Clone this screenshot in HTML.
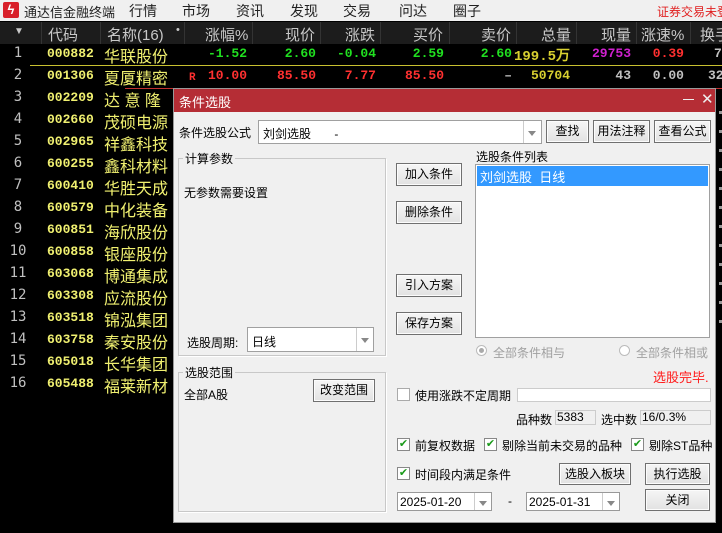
<!DOCTYPE html>
<html><head><meta charset="utf-8"><style>
*{margin:0;padding:0;box-sizing:border-box}
body{width:722px;height:533px;background:#000;position:relative;overflow:hidden;font-family:"Liberation Sans","Noto Sans CJK SC",sans-serif}
.a{position:absolute;white-space:nowrap}
.top{left:0;top:0;width:722px;height:21px;background:#f0f0f0;font-size:14px;color:#222}
.hdr{left:0;top:22px;width:722px;height:22px;background:#1c1c1c;color:#c8c8c8;font-size:15px}
.sep{position:absolute;top:0;width:1px;height:22px;background:#333}
.num{font-family:"Liberation Mono","DejaVu Sans Mono",monospace;font-weight:bold;font-size:13px}
.yc{color:#f0f070}
.nm{color:#f0f070;font-size:16px;left:104px}
.rn{color:#c0c0c0;font-size:14px;width:36px;text-align:center;left:0;font-family:"DejaVu Sans Mono",monospace}
.r{text-align:right}
.dlg{left:173px;top:88px;width:543px;height:435px;background:#f0f0f0;border:1px solid #999;font-size:12px;color:#000}
.tb{left:0;top:0;width:541px;height:23px;background:#b52d35;color:#fff;font-size:13px}
.btn{position:absolute;background:linear-gradient(#f6f6f6,#e2e2e2);border:1px solid #707070;box-shadow:inset 0 0 0 1px #fcfcfc;font-size:12px;text-align:center;color:#000}
.grp{position:absolute;border:1px solid #c8c8c8;box-shadow:1px 1px 0 #fff}
.gl{position:absolute;background:#f0f0f0;padding:0 2px;font-size:12px;top:-9px;left:4px}
.cb{position:absolute;width:13px;height:13px;border:1px solid #888;background:#fff;color:#1a9a1a;font-size:11px;line-height:11px;text-align:center}
.combo{position:absolute;background:#fff;border:1px solid #a0a0a0}
.dd{position:absolute;right:0;top:0;bottom:0;width:17px;border-left:1px solid #ccc}
.dd:after{content:"";position:absolute;left:4px;top:45%;border:4px solid transparent;border-top:5px solid #888}
.t13{font-size:12px}
</style></head><body>
<div class="a top">
 <div class="a" style="left:3px;top:2px;width:16px;height:16px;background:#d8202a;border-radius:2px;color:#fff;font-size:13px;line-height:16px;text-align:center;font-weight:bold">ϟ</div>
 <div class="a" style="left:24px;top:2px;font-size:13px">通达信金融终端</div>
 <div class="a" style="left:129px;top:1px">行情</div>
 <div class="a" style="left:182px;top:1px">市场</div>
 <div class="a" style="left:236px;top:1px">资讯</div>
 <div class="a" style="left:290px;top:1px">发现</div>
 <div class="a" style="left:343px;top:1px">交易</div>
 <div class="a" style="left:399px;top:1px">问达</div>
 <div class="a" style="left:453px;top:1px">圈子</div>
 <div class="a" style="left:657px;top:3px;color:#e02020;font-size:12px">证券交易未登</div>
</div>
<div class="a hdr">
 <div class="sep" style="left:41px"></div><div class="sep" style="left:100px"></div><div class="sep" style="left:184px"></div><div class="sep" style="left:252px"></div><div class="sep" style="left:320px"></div><div class="sep" style="left:380px"></div><div class="sep" style="left:449px"></div><div class="sep" style="left:516px"></div><div class="sep" style="left:576px"></div><div class="sep" style="left:636px"></div><div class="sep" style="left:690px"></div>
 <div class="a" style="left:14px;top:4px;font-size:10px">▼</div>
 <div class="a" style="left:48px;top:2px">代码</div>
 <div class="a" style="left:107px;top:2px">名称(16)</div>
 <div class="a" style="left:176px;top:2px;font-size:11px">•</div>
 <div class="a" style="left:205px;top:2px">涨幅%</div>
 <div class="a" style="left:285px;top:2px">现价</div>
 <div class="a" style="left:345px;top:2px">涨跌</div>
 <div class="a" style="left:413px;top:2px">买价</div>
 <div class="a" style="left:481px;top:2px">卖价</div>
 <div class="a" style="left:541px;top:2px">总量</div>
 <div class="a" style="left:601px;top:2px">现量</div>
 <div class="a" style="left:641px;top:2px">涨速%</div>
 <div class="a" style="left:700px;top:2px">换手</div>
</div>
<div class="a" style="left:30px;top:65px;width:692px;height:1px;background:#c8c030"></div>
<div class="a" style="left:125px;top:88px;width:597px;height:1px;background:#c03030"></div>
<!-- row1 -->
<div class="a rn" style="top:45px">1</div><div class="a num yc" style="left:47px;top:46px">000882</div><div class="a nm" style="top:43px">华联股份</div>
<div class="a num r" style="right:475px;top:46px;color:#20e020">-1.52</div>
<div class="a num r" style="right:406px;top:46px;color:#20e020">2.60</div>
<div class="a num r" style="right:346px;top:46px;color:#20e020">-0.04</div>
<div class="a num r" style="right:278px;top:46px;color:#20e020">2.59</div>
<div class="a num r" style="right:210px;top:46px;color:#20e020">2.60</div>
<div class="a num r" style="right:152px;top:45px;color:#d8d030;font-size:14px">199.5万</div>
<div class="a num r" style="right:91px;top:46px;color:#d020d0">29753</div>
<div class="a num r" style="right:38px;top:46px;color:#ff3030">0.39</div>
<div class="a num" style="left:714px;top:46px;color:#c0c0c0">7</div>
<!-- row2 -->
<div class="a rn" style="top:67px">2</div><div class="a num yc" style="left:47px;top:68px">001306</div><div class="a nm" style="top:65px">夏厦精密</div>
<div class="a num" style="left:189px;top:72px;color:#ff3030;font-size:11px">R</div>
<div class="a num r" style="right:475px;top:68px;color:#ff3030">10.00</div>
<div class="a num r" style="right:406px;top:68px;color:#ff3030">85.50</div>
<div class="a num r" style="right:346px;top:68px;color:#ff3030">7.77</div>
<div class="a num r" style="right:278px;top:68px;color:#ff3030">85.50</div>
<div class="a num r" style="right:210px;top:68px;color:#c0c0c0">–</div>
<div class="a num r" style="right:152px;top:68px;color:#d8d030">50704</div>
<div class="a num r" style="right:91px;top:68px;color:#c0c0c0">43</div>
<div class="a num r" style="right:38px;top:68px;color:#c0c0c0">0.00</div>
<div class="a num" style="left:708px;top:68px;color:#c0c0c0">32</div>
<!-- rows 3-16 -->
<div class="a rn" style="top:89px">3</div><div class="a num yc" style="left:47px;top:90px">002209</div><div class="a nm" style="top:87px">达 意 隆</div>
<div class="a rn" style="top:111px">4</div><div class="a num yc" style="left:47px;top:112px">002660</div><div class="a nm" style="top:109px">茂硕电源</div>
<div class="a rn" style="top:133px">5</div><div class="a num yc" style="left:47px;top:134px">002965</div><div class="a nm" style="top:131px">祥鑫科技</div>
<div class="a rn" style="top:155px">6</div><div class="a num yc" style="left:47px;top:156px">600255</div><div class="a nm" style="top:153px">鑫科材料</div>
<div class="a rn" style="top:177px">7</div><div class="a num yc" style="left:47px;top:178px">600410</div><div class="a nm" style="top:175px">华胜天成</div>
<div class="a rn" style="top:199px">8</div><div class="a num yc" style="left:47px;top:200px">600579</div><div class="a nm" style="top:197px">中化装备</div>
<div class="a rn" style="top:221px">9</div><div class="a num yc" style="left:47px;top:222px">600851</div><div class="a nm" style="top:219px">海欣股份</div>
<div class="a rn" style="top:243px">10</div><div class="a num yc" style="left:47px;top:244px">600858</div><div class="a nm" style="top:241px">银座股份</div>
<div class="a rn" style="top:265px">11</div><div class="a num yc" style="left:47px;top:266px">603068</div><div class="a nm" style="top:263px">博通集成</div>
<div class="a rn" style="top:287px">12</div><div class="a num yc" style="left:47px;top:288px">603308</div><div class="a nm" style="top:285px">应流股份</div>
<div class="a rn" style="top:309px">13</div><div class="a num yc" style="left:47px;top:310px">603518</div><div class="a nm" style="top:307px">锦泓集团</div>
<div class="a rn" style="top:331px">14</div><div class="a num yc" style="left:47px;top:332px">603758</div><div class="a nm" style="top:329px">秦安股份</div>
<div class="a rn" style="top:353px">15</div><div class="a num yc" style="left:47px;top:354px">605018</div><div class="a nm" style="top:351px">长华集团</div>
<div class="a rn" style="top:375px">16</div><div class="a num yc" style="left:47px;top:376px">605488</div><div class="a nm" style="top:373px">福莱新材</div>
<div class="a" style="left:719px;top:95px;width:3px;height:230px;background:repeating-linear-gradient(#000 0 16px,#999 16px 19px)"></div>

<!-- dialog -->
<div class="a dlg">
 <div class="a tb"><div class="a" style="left:5px;top:3px">条件选股</div>
  <div class="a" style="left:509px;top:10px;width:11px;height:1px;background:#eee"></div>
  <div class="a" style="left:527px;top:1px;font-size:15px;color:#eee">✕</div></div>
 <div class="a t13" style="left:5px;top:35px">条件选股公式</div>
 <div class="combo" style="left:84px;top:31px;width:284px;height:24px"><div class="a t13" style="left:4px;top:4px">刘剑选股&nbsp;&nbsp;&nbsp;&nbsp;&nbsp;&nbsp;&nbsp;-</div><div class="dd" style="width:18px"></div></div>
 <div class="btn" style="left:372px;top:31px;width:43px;height:23px;line-height:21px">查找</div>
 <div class="btn" style="left:419px;top:31px;width:57px;height:23px;line-height:21px">用法注释</div>
 <div class="btn" style="left:480px;top:31px;width:57px;height:23px;line-height:21px">查看公式</div>
 <div class="grp" style="left:4px;top:69px;width:208px;height:198px"><div class="gl">计算参数</div>
  <div class="a t13" style="left:5px;top:25px">无参数需要设置</div>
  <div class="a t13" style="left:8px;top:175px">选股周期:</div>
  <div class="combo" style="left:68px;top:168px;width:127px;height:25px"><div class="a t13" style="left:4px;top:5px">日线</div><div class="dd"></div></div>
 </div>
 <div class="grp" style="left:4px;top:283px;width:208px;height:140px"><div class="gl">选股范围</div>
  <div class="a t13" style="left:5px;top:13px">全部A股</div>
  <div class="btn" style="left:134px;top:6px;width:62px;height:23px;line-height:21px">改变范围</div>
 </div>
 <div class="btn" style="left:222px;top:74px;width:66px;height:23px;line-height:21px">加入条件</div>
 <div class="btn" style="left:222px;top:112px;width:66px;height:23px;line-height:21px">删除条件</div>
 <div class="btn" style="left:222px;top:185px;width:66px;height:23px;line-height:21px">引入方案</div>
 <div class="btn" style="left:222px;top:223px;width:66px;height:23px;line-height:21px">保存方案</div>
 <div class="a t13" style="left:302px;top:59px">选股条件列表</div>
 <div class="a" style="left:301px;top:75px;width:235px;height:174px;background:#fff;border:1px solid #a0a0a0">
  <div class="a" style="left:1px;top:1px;width:231px;height:20px;background:#3399ff;color:#fff;font-size:13px;padding:1px 3px">刘剑选股&nbsp;&nbsp;日线</div></div>
 <div class="a" style="left:302px;top:256px;width:11px;height:11px;border-radius:50%;border:1px solid #bbb;background:#fff"><div class="a" style="left:2px;top:2px;width:5px;height:5px;border-radius:50%;background:#aaa"></div></div>
 <div class="a" style="left:319px;top:255px;color:#a0a0a0">全部条件相与</div>
 <div class="a" style="left:445px;top:256px;width:11px;height:11px;border-radius:50%;border:1px solid #bbb;background:#fff"></div>
 <div class="a" style="left:462px;top:255px;color:#a0a0a0">全部条件相或</div>
 <div class="a" style="left:479px;top:278px;color:#ff1a1a;font-size:13px">选股完毕.</div>
 <div class="cb" style="left:223px;top:299px;border-color:#aaa"></div>
 <div class="a t13" style="left:241px;top:298px">使用涨跌不定周期</div>
 <div class="a" style="left:343px;top:299px;width:194px;height:14px;background:#fff;border:1px solid #ccc"></div>
 <div class="a t13" style="left:342px;top:322px">品种数</div>
 <div class="a t13" style="left:381px;top:321px;width:41px;height:15px;border:1px solid #ccc;line-height:13px;padding-left:1px">5383</div>
 <div class="a t13" style="left:427px;top:322px">选中数</div>
 <div class="a t13" style="left:466px;top:321px;width:71px;height:15px;border:1px solid #ccc;line-height:13px;padding-left:1px">16/0.3%</div>
 <div class="cb" style="left:223px;top:349px">✔</div><div class="a t13" style="left:241px;top:348px">前复权数据</div>
 <div class="cb" style="left:310px;top:349px">✔</div><div class="a t13" style="left:328px;top:348px">剔除当前未交易的品种</div>
 <div class="cb" style="left:457px;top:349px">✔</div><div class="a t13" style="left:475px;top:348px">剔除ST品种</div>
 <div class="cb" style="left:223px;top:378px">✔</div><div class="a t13" style="left:241px;top:377px">时间段内满足条件</div>
 <div class="btn" style="left:385px;top:374px;width:72px;height:22px;line-height:20px">选股入板块</div>
 <div class="btn" style="left:471px;top:374px;width:65px;height:22px;line-height:20px">执行选股</div>
 <div class="btn" style="left:471px;top:400px;width:65px;height:22px;line-height:20px">关闭</div>
 <div class="combo" style="left:223px;top:403px;width:95px;height:19px;border-color:#999"><div class="a" style="left:2px;top:2px;font-size:12px">2025-01-20</div><div class="dd"></div></div>
 <div class="a" style="left:334px;top:405px">-</div>
 <div class="combo" style="left:352px;top:403px;width:94px;height:19px;border-color:#999"><div class="a" style="left:2px;top:2px;font-size:12px">2025-01-31</div><div class="dd"></div></div>
</div>
</body></html>
